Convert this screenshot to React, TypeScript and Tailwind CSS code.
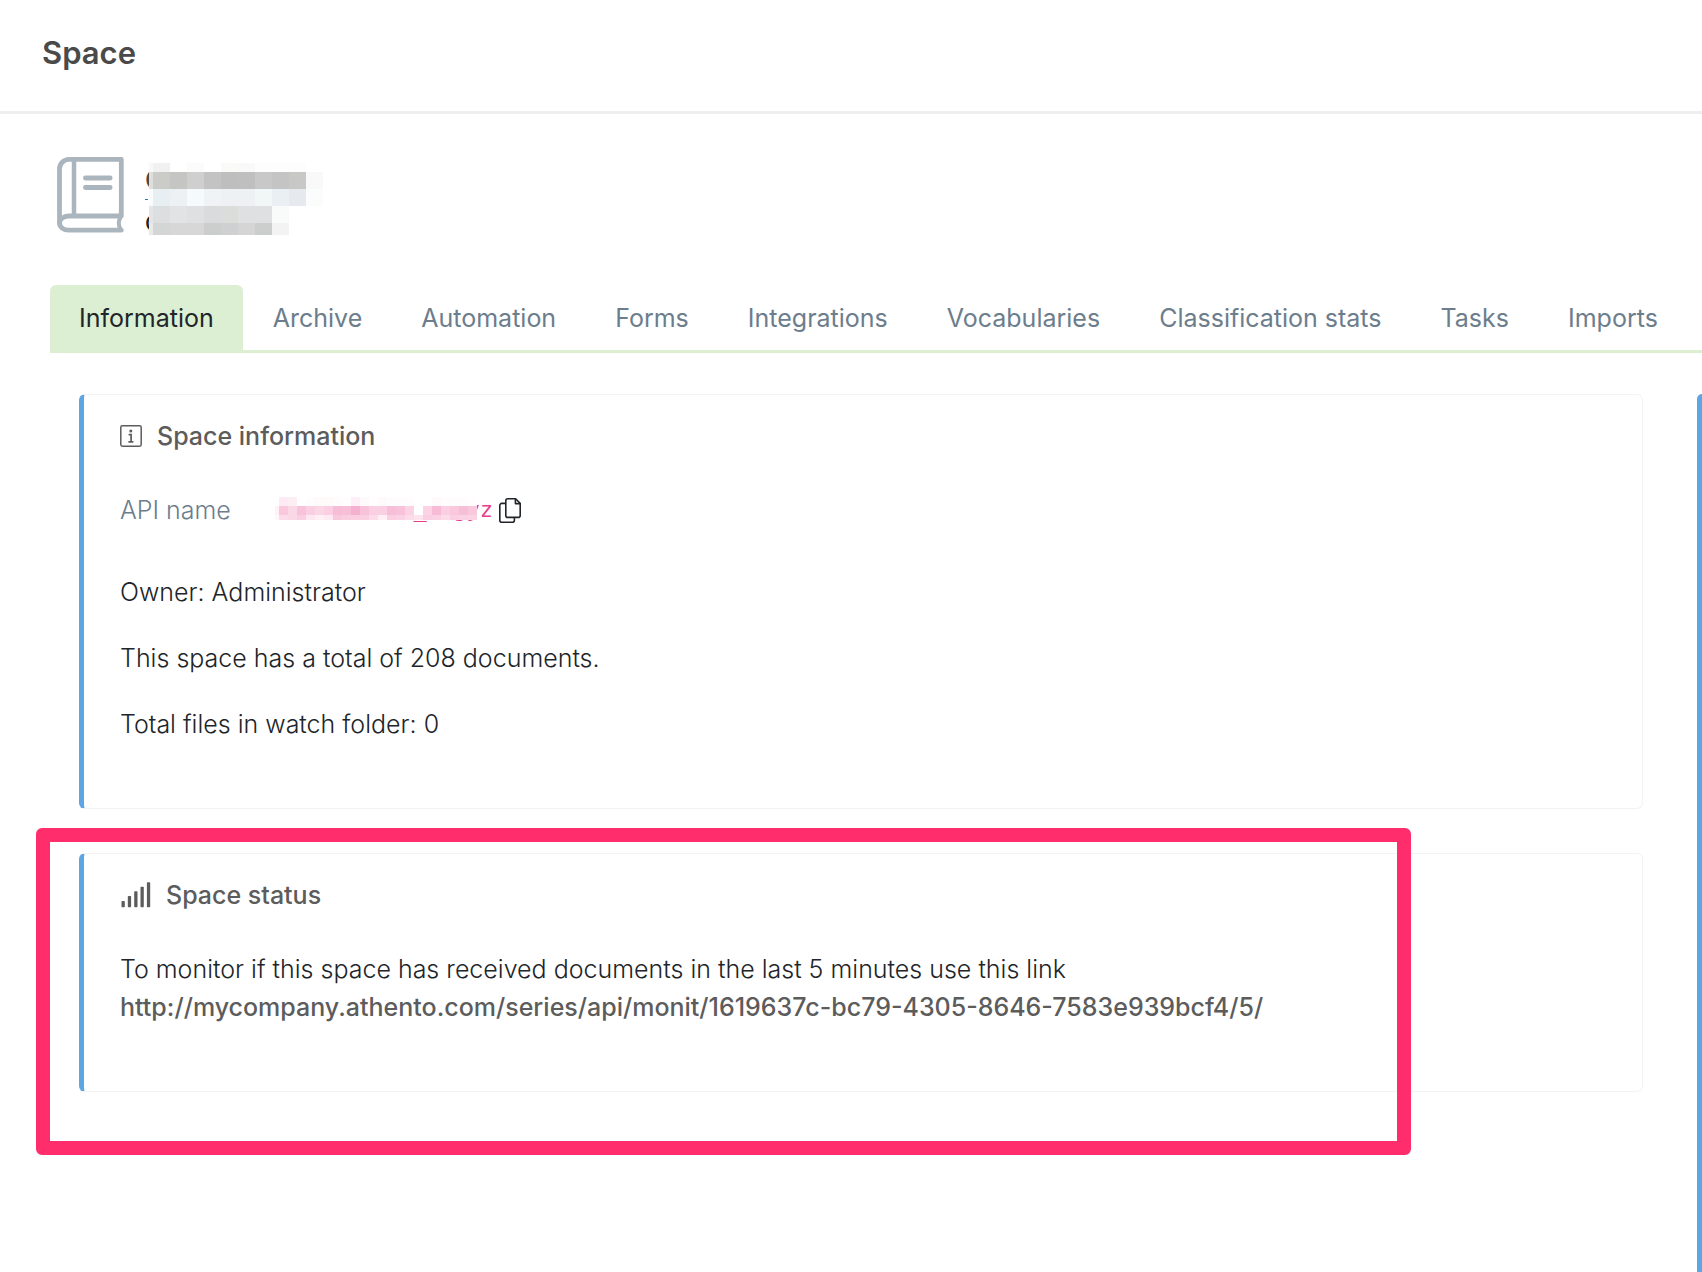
import clsx from 'clsx';
import type { ReactNode } from 'react';

const tabs = [
  'Information',
  'Archive',
  'Automation',
  'Forms',
  'Integrations',
  'Vocabularies',
  'Classification stats',
  'Tasks',
  'Imports',
];

const monitorUrl = 'http://mycompany.athento.com/series/api/monit/1619637c-bc79-4305-8646-7583e939bcf4/5/';

interface PixelRow {
  height: number;
  colors: string;
}

// Blocks that hide the space name and its description
const nameRows: PixelRow[] = [
  { height: 9, colors: 'f8f8f7 f1f1f1 ffffff fbfbfb ffffff fafaf9 f8f9f8 fdfdfd fdfdfd fdfdfd ffffff' },
  { height: 17, colors: 'dededd cbcbc8 c5c5c4 cfcfcf c3c3c3 bebebe bfbfbf c8c8c8 c4c4c4 c8c8c6 f9f9f9' },
  { height: 17, colors: 'f9fbfd e8eff2 edf1f4 f5fafd eff3f6 edf1f4 edf1f4 f1f7f7 e9eff2 e6eaee fbfdfd' },
  { height: 17, colors: 'e4e5e6 dddee0 e2e3e5 dfe0e2 dadbdd dbdddb dfe0e2 dfe0e2 f9fbfa ffffff ffffff' },
  { height: 12, colors: 'e9eaea d4d5d5 d7d7d7 d7d7d7 cccece cfd0d2 d5d5d5 cccece f3f3f3 ffffff ffffff' },
];

// Blocks that hide the API name
const apiRows: PixelRow[] = [
  {
    height: 9,
    colors:
      'ffffff fdeaf2 fdeef4 ffffff fefcfd fffafa fffafa fefcfd fffdfe fdeff5 fefafb fffdfe fffafa fefcfd fefcfd fefcfd ffffff ffffff fef9fb fefcfd fefcfd fefcfd fffdfe',
  },
  {
    height: 9,
    colors:
      'fff1f6 f9c8dd fbd8e6 f8c3da facfe1 fbd6e5 facfe1 f7bdd6 f8c0d8 f5b0cf f8c3da facfe1 facfe1 f7bfd7 f8c2da fbd3e4 ffffff fbd3e4 f7bbd5 facfe1 f9c8dd f7bfd7 fac8dd',
  },
  {
    height: 5,
    colors:
      'fff8fb fbdce8 fbd8e6 facfe1 fde8f1 fff0f6 fdeaf2 f9c8dd facde0 facde0 facfe1 fbdce8 fff0f6 facfe1 fad2e3 fbdce8 fde3ed facfe1 fad2e3 fbdce8 facfe1 fad2e3 fbd3e4',
  },
];

export default function App() {
  return (
    <div className="flex min-h-screen flex-col overflow-hidden bg-white font-['Inter','Liberation_Sans',sans-serif] text-[25px] leading-[38px] text-[#212529]">
      <header className="border-b-3 border-[#eeeeee] px-[42px] pt-[29px] pb-[35px]">
        <h1 className="text-[31px] leading-[47px] font-semibold text-[#4a4a4a]">Space</h1>
      </header>

      {/* Space identity */}
      <section className="flex gap-[21px] px-[57px] pt-[43px]">
        <BookIcon />
        <div className="relative flex flex-col gap-3 pt-2 leading-[31px] font-medium">
          <span className="text-[#4a4a4a]">C</span>
          <span className="text-[22px]">C</span>
          <span className="absolute top-[42px] left-0 h-px w-[3px] bg-[#1a84c0]" />
          <div className="absolute top-1.5 left-1">
            <Pixels rows={nameRows} size={17} lead={4} label="Hidden space name" />
          </div>
        </div>
      </section>

      {/* Tabs */}
      <nav className="mt-[46px] ml-[50px] flex gap-px border-b-3 border-[#dcefd3]">
        {tabs.map((tab, index) => (
          <button
            key={tab}
            type="button"
            className={clsx(
              'h-[65px] shrink-0 px-[29px]',
              index === 0 ? 'rounded-t-md bg-[#dcefd3] text-[#212529]' : 'text-[#6c7d8c]'
            )}
          >
            {tab}
          </button>
        ))}
      </nav>

      <main className="mt-[41px] flex grow gap-[54px] pl-[79px]">
        <div className="flex min-w-0 grow flex-col gap-11">
          <Card icon={<InfoIcon />} title="Space information">
            <dl className="flex">
              <dt className="w-[155px] text-[#6c7d8c]">API name</dt>
              <dd className="flex items-center gap-1.5">
                <span className="relative w-[218px] text-right font-['DejaVu_Sans_Mono',monospace] text-[22px] font-normal whitespace-pre text-[#e83e8c]">
                  {'_  gyz'}
                  <span className="absolute top-[6px] left-0">
                    <Pixels rows={apiRows} size={9} lead={4} label="Hidden API name" />
                  </span>
                </span>
                <button type="button" aria-label="Copy API name">
                  <CopyIcon />
                </button>
              </dd>
            </dl>
            <p className="mt-11">Owner: Administrator</p>
            <p className="mt-7">This space has a total of 208 documents.</p>
            <p className="mt-7">Total files in watch folder: 0</p>
          </Card>

          <div className="relative">
            <Card icon={<SignalIcon />} title="Space status">
              <p>To monitor if this space has received documents in the last 5 minutes use this link</p>
              <a href={monitorUrl} className="font-medium text-[#5c5c5c]">
                {monitorUrl}
              </a>
            </Card>
            {/* Highlight frame */}
            <div className="pointer-events-none absolute -top-[25px] right-[232px] -bottom-[63px] -left-[43px] rounded-md border-14 border-[#ff2d6c]" />
          </div>
        </div>
        <aside className="w-[5px] shrink-0 rounded-tl-md bg-[#5ea5e3]" />
      </main>
    </div>
  );
}

function Card({ icon, title, children }: { icon: ReactNode; title: string; children: ReactNode }) {
  return (
    <section className="rounded-md border border-l-5 border-[#f3f3f3] border-l-[#5ea5e3] px-9 pt-[22px] pb-[65px] font-light">
      <h2 className="mb-9 flex items-center gap-[15px] font-medium text-[#5c5c5c]">
        {icon}
        {title}
      </h2>
      {children}
    </section>
  );
}

function Pixels({ rows, size, lead, label }: { rows: PixelRow[]; size: number; lead: number; label: string }) {
  const columns = rows[0].colors.split(' ').length;
  const width = lead + (columns - 1) * size;
  const height = rows.reduce((sum, row) => sum + row.height, 0);
  let y = 0;

  return (
    <svg width={width} height={height} role="img" aria-label={label} shapeRendering="crispEdges">
      {rows.map((row, r) => {
        const top = y;
        y += row.height;
        return row.colors.split(' ').map((color, c) => (
          <rect
            key={`${r}-${c}`}
            x={c === 0 ? 0 : lead + (c - 1) * size}
            y={top}
            width={c === 0 ? lead : size}
            height={row.height}
            fill={`#${color}`}
          />
        ));
      })}
    </svg>
  );
}

function BookIcon() {
  return (
    <svg
      width="67"
      height="76"
      viewBox="0 0 67 76"
      fill="none"
      stroke="#abb5be"
      strokeWidth="4.8"
      strokeLinecap="round"
      strokeLinejoin="round"
      aria-hidden="true"
    >
      <path d="M64.3 59V2.4H12A9.5 9.5 0 0 0 2.5 12v54a9 7 0 0 1 9-7H64.3" />
      <path d="M2.5 66a9 7.2 0 0 0 9 7.2H64.3" />
      <path d="M17 3v55" strokeWidth="4.5" />
      <path d="M63.5 60.5q-3.4 5.5 0 11.5" strokeWidth="4" />
      <path d="M28.4 21h24.8M28.4 30.5h24.8" />
    </svg>
  );
}

function InfoIcon() {
  return (
    <svg width="22" height="22" viewBox="0 0 22 22" fill="none" stroke="currentColor" strokeWidth="1.5" aria-hidden="true">
      <rect x="0.8" y="0.8" width="20.4" height="20.4" rx="1.6" />
      <circle cx="10.8" cy="6" r="1.5" fill="currentColor" stroke="none" />
      <path d="M8.6 9.6h2.5v7.2M8.4 16.9h5" strokeWidth="1.7" />
    </svg>
  );
}

function SignalIcon() {
  return (
    <svg width="31" height="26" viewBox="0 0 31 26" fill="currentColor" aria-hidden="true">
      <rect x="1.5" y="19" width="3.3" height="6.2" rx="0.8" />
      <rect x="7.8" y="14" width="3.3" height="11.2" rx="0.8" />
      <rect x="14.2" y="9.2" width="3.3" height="16" rx="0.8" />
      <rect x="20.5" y="4.8" width="3.3" height="20.4" rx="0.8" />
      <rect x="26.9" y="0.2" width="3.3" height="25" rx="0.8" />
    </svg>
  );
}

function CopyIcon() {
  return (
    <svg
      width="22"
      height="25"
      viewBox="0 0 22 25"
      fill="none"
      stroke="#212529"
      strokeWidth="1.6"
      strokeLinejoin="round"
      aria-hidden="true"
    >
      <path d="M8.8 0.8h7.8l4.6 4.6v12a2 2 0 0 1-2 2H8.8a2 2 0 0 1-2-2V2.8a2 2 0 0 1 2-2z" />
      <path d="M16.4 1v4.6h4.6" />
      <path d="M6.8 5.4h-4a2 2 0 0 0-2 2v14.8a2 2 0 0 0 2 2h10.6a2 2 0 0 0 2-2v-2.6" />
    </svg>
  );
}
